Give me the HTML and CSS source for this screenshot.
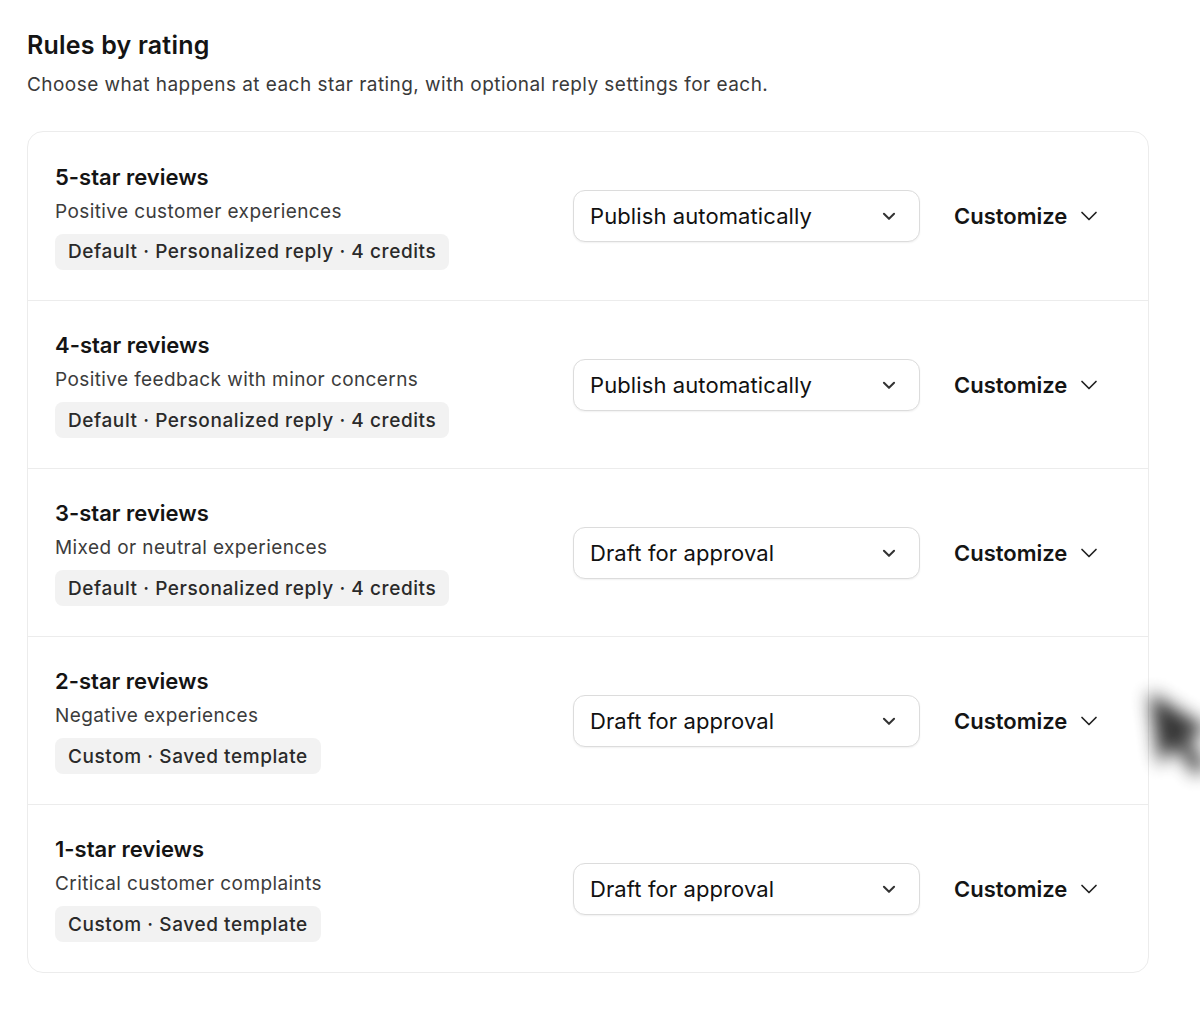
FILE: index.html
```html
<!DOCTYPE html>
<html lang="en">
<head>
<meta charset="utf-8">
<title>Rules by rating</title>
<link rel="stylesheet" href="styles.css">
</head>
<body>
<main class="page">
  <header class="section-head">
    <h1 class="section-title">Rules by rating</h1>
    <p class="section-desc">Choose what happens at each star rating, with optional reply settings for each.</p>
  </header>

  <section class="rules-card">
    <div class="rule-row">
      <div class="rule-info">
        <h2 class="rule-title">5-star reviews</h2>
        <p class="rule-desc">Positive customer experiences</p>
        <span class="rule-badge">Default · Personalized reply · 4 credits</span>
      </div>
      <button class="select">
        <span class="select-label">Publish automatically</span>
        <svg class="select-chevron" viewBox="0 0 16 16"><path d="M3.5 6l4.5 4.5L12.5 6"/></svg>
      </button>
      <button class="customize">Customize
        <svg class="customize-chevron" viewBox="0 0 18 18"><path d="M2 5.5l7 7 7-7"/></svg>
      </button>
    </div>

    <div class="rule-row">
      <div class="rule-info">
        <h2 class="rule-title">4-star reviews</h2>
        <p class="rule-desc">Positive feedback with minor concerns</p>
        <span class="rule-badge">Default · Personalized reply · 4 credits</span>
      </div>
      <button class="select">
        <span class="select-label">Publish automatically</span>
        <svg class="select-chevron" viewBox="0 0 16 16"><path d="M3.5 6l4.5 4.5L12.5 6"/></svg>
      </button>
      <button class="customize">Customize
        <svg class="customize-chevron" viewBox="0 0 18 18"><path d="M2 5.5l7 7 7-7"/></svg>
      </button>
    </div>

    <div class="rule-row">
      <div class="rule-info">
        <h2 class="rule-title">3-star reviews</h2>
        <p class="rule-desc">Mixed or neutral experiences</p>
        <span class="rule-badge">Default · Personalized reply · 4 credits</span>
      </div>
      <button class="select">
        <span class="select-label">Draft for approval</span>
        <svg class="select-chevron" viewBox="0 0 16 16"><path d="M3.5 6l4.5 4.5L12.5 6"/></svg>
      </button>
      <button class="customize">Customize
        <svg class="customize-chevron" viewBox="0 0 18 18"><path d="M2 5.5l7 7 7-7"/></svg>
      </button>
    </div>

    <div class="rule-row">
      <div class="rule-info">
        <h2 class="rule-title">2-star reviews</h2>
        <p class="rule-desc">Negative experiences</p>
        <span class="rule-badge">Custom · Saved template</span>
      </div>
      <button class="select">
        <span class="select-label">Draft for approval</span>
        <svg class="select-chevron" viewBox="0 0 16 16"><path d="M3.5 6l4.5 4.5L12.5 6"/></svg>
      </button>
      <button class="customize">Customize
        <svg class="customize-chevron" viewBox="0 0 18 18"><path d="M2 5.5l7 7 7-7"/></svg>
      </button>
    </div>

    <div class="rule-row">
      <div class="rule-info">
        <h2 class="rule-title">1-star reviews</h2>
        <p class="rule-desc">Critical customer complaints</p>
        <span class="rule-badge">Custom · Saved template</span>
      </div>
      <button class="select">
        <span class="select-label">Draft for approval</span>
        <svg class="select-chevron" viewBox="0 0 16 16"><path d="M3.5 6l4.5 4.5L12.5 6"/></svg>
      </button>
      <button class="customize">Customize
        <svg class="customize-chevron" viewBox="0 0 18 18"><path d="M2 5.5l7 7 7-7"/></svg>
      </button>
    </div>
  </section>
</main>

<!-- mouse pointer, moving (motion blurred) -->
<svg class="pointer" viewBox="0 0 70 110" aria-hidden="true">
  <path d="M14 8 L66 52 L44 56 L58 86 L46 92 L32 62 L14 78 Z" fill="#111"/>
</svg>
</body>
</html>
```

FILE: styles.css
```css
* { box-sizing: border-box; }

html, body {
  margin: 0;
  background: #ffffff;
}

body {
  font-family: Inter, "Noto Sans", "Liberation Sans", sans-serif;
  color: #111;
  overflow: hidden;
}

.page {
  padding: 29px 52px 0 27px;
  width: 1200px;
}

.section-title {
  margin: 0;
  font-size: 25px;
  font-weight: 600;
  line-height: 32px;
  letter-spacing: 0.2px;
  color: #141414;
}

.section-desc {
  margin: 11px 0 0;
  font-size: 19px;
  line-height: 26px;
  color: #3a3a3a;
  letter-spacing: 0.45px;
}

.rules-card {
  margin-top: 33px;
  width: 1122px;
  border: 1.5px solid #ececec;
  border-radius: 16px;
  background: #fff;
}

.rule-row {
  display: flex;
  align-items: center;
  height: 168px;
  padding: 0 0 0 27px;
  border-top: 1.5px solid #ececec;
}

.rule-row:first-child { border-top: 0; }

.rule-info {
  flex: 1;
  display: flex;
  flex-direction: column;
  align-items: flex-start;
}

.rule-title {
  margin: 0;
  font-size: 22px;
  font-weight: 600;
  line-height: 28px;
  color: #141414;
}

.rule-desc {
  margin: 8px 0 0;
  font-size: 19px;
  line-height: 26px;
  color: #3c3c3c;
  letter-spacing: 0.4px;
}

.rule-badge {
  margin-top: 9px;
  padding: 0 13px;
  height: 36px;
  display: inline-flex;
  align-items: center;
  background: #f2f2f2;
  border-radius: 8px;
  font-size: 19px;
  font-weight: 500;
  color: #2a2a2a;
  letter-spacing: 0.58px;
}

.select {
  width: 347px;
  height: 52px;
  display: flex;
  align-items: center;
  justify-content: space-between;
  padding: 0 21px 0 16px;
  margin-right: 34px;
  background: #fff;
  border: 1.5px solid #dcdcdc;
  border-radius: 12px;
  box-shadow: 0 1px 2px rgba(0, 0, 0, 0.06);
  font-family: inherit;
  cursor: pointer;
}

.select-label {
  font-size: 22px;
  font-weight: 400;
  color: #111;
  letter-spacing: 0.1px;
}

.select-chevron {
  width: 18px;
  height: 18px;
  fill: none;
  stroke: #333;
  stroke-width: 1.8;
  stroke-linecap: round;
  stroke-linejoin: round;
}

.customize {
  display: flex;
  align-items: center;
  gap: 13px;
  width: 194px;
  padding: 0;
  background: none;
  border: 0;
  font-family: inherit;
  font-size: 22px;
  font-weight: 600;
  color: #141414;
  cursor: pointer;
}

.customize-chevron {
  width: 18px;
  height: 18px;
  fill: none;
  stroke: #222;
  stroke-width: 1.7;
  stroke-linecap: round;
  stroke-linejoin: round;
}

.pointer {
  position: absolute;
  left: 1140px;
  top: 680px;
  width: 76px;
  height: 116px;
  filter: blur(9px);
  opacity: 0.85;
  transform: rotate(-8deg);
}
```
